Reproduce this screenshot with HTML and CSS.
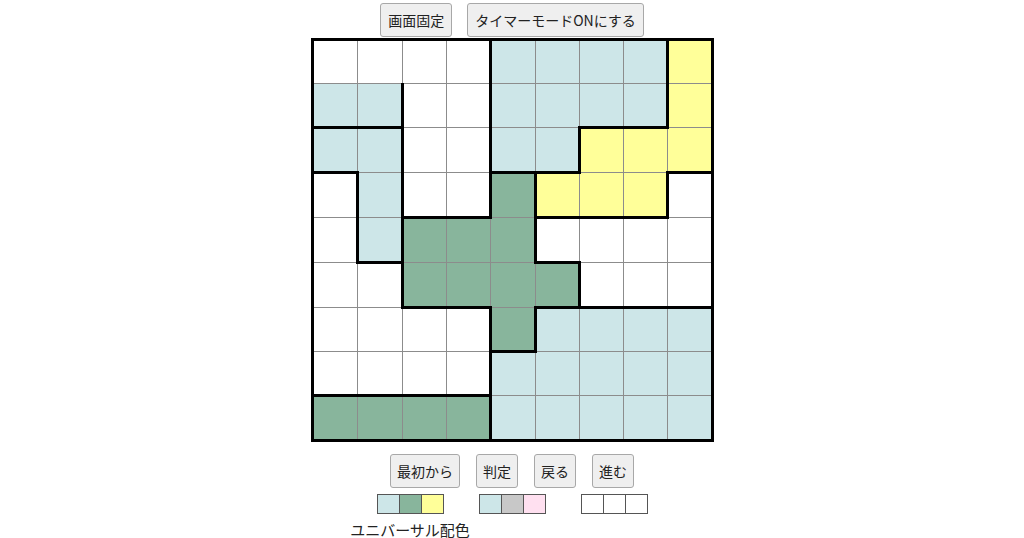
FILE: index.html
```html
<!DOCTYPE html>
<html lang="ja">
<head>
<meta charset="utf-8">
<title>パズル</title>
<link rel="stylesheet" href="styles.css">
</head>
<body>
<div class="page">
  <div class="toolbar top">
    <button class="btn">画面固定</button>
    <button class="btn">タイマーモードONにする</button>
  </div>
  <table class="board">
    <tr><td></td><td></td><td></td><td class="r"></td><td class="c1"></td><td class="c1"></td><td class="c1"></td><td class="c1 r"></td><td class="c3"></td></tr>
    <tr><td class="c1 b"></td><td class="c1 b r"></td><td></td><td class="r"></td><td class="c1"></td><td class="c1"></td><td class="c1"></td><td class="c1 r"></td><td class="c3"></td></tr>
    <tr><td class="c1 t"></td><td class="c1 r"></td><td></td><td class="r"></td><td class="c1"></td><td class="c1 r"></td><td class="c3 t"></td><td class="c3 t"></td><td class="c3"></td></tr>
    <tr><td class="t r"></td><td class="c1 r"></td><td></td><td class="r"></td><td class="c2 t r"></td><td class="c3 t"></td><td class="c3"></td><td class="c3 r"></td><td class="t"></td></tr>
    <tr><td class="r"></td><td class="c1 r b"></td><td class="c2 t"></td><td class="c2 t"></td><td class="c2 r"></td><td class="t b"></td><td class="t"></td><td class="t"></td><td></td></tr>
    <tr><td></td><td class="r"></td><td class="c2 b"></td><td class="c2 b"></td><td class="c2"></td><td class="c2 r b"></td><td class="b"></td><td class="b"></td><td class="b"></td></tr>
    <tr><td></td><td></td><td></td><td class="r"></td><td class="c2 r b"></td><td class="c1"></td><td class="c1"></td><td class="c1"></td><td class="c1"></td></tr>
    <tr><td class="b"></td><td class="b"></td><td class="b"></td><td class="b r"></td><td class="c1"></td><td class="c1"></td><td class="c1"></td><td class="c1"></td><td class="c1"></td></tr>
    <tr><td class="c2"></td><td class="c2"></td><td class="c2"></td><td class="c2 r"></td><td class="c1"></td><td class="c1"></td><td class="c1"></td><td class="c1"></td><td class="c1"></td></tr>
  </table>
  <div class="toolbar bottom">
    <button class="btn">最初から</button>
    <button class="btn">判定</button>
    <button class="btn">戻る</button>
    <button class="btn">進む</button>
  </div>
  <div class="palettes">
    <div class="palette">
      <div class="swatches">
        <span class="sw c1"></span><span class="sw c2"></span><span class="sw c3"></span>
      </div>
      <div class="palette-label">ユニバーサル配色</div>
    </div>
    <div class="palette">
      <div class="swatches">
        <span class="sw c1"></span><span class="sw gray"></span><span class="sw pink"></span>
      </div>
    </div>
    <div class="palette">
      <div class="swatches">
        <span class="sw"></span><span class="sw"></span><span class="sw"></span>
      </div>
    </div>
  </div>
</div>
</body>
</html>
```

FILE: styles.css
```css
html, body {
  margin: 0;
  padding: 0;
  background: #fff;
}
body {
  font-family: "Noto Sans CJK JP", "Noto Sans", sans-serif;
  color: #222;
}
.page {
  display: flex;
  flex-direction: column;
  align-items: center;
  padding-top: 3px;
}
.toolbar {
  display: flex;
  justify-content: center;
}
.toolbar.top {
  gap: 15px;
}
.toolbar.bottom {
  gap: 16px;
  margin-top: 12px;
}
.btn {
  font-family: "Noto Sans CJK JP", "Noto Sans", sans-serif;
  font-size: 14px;
  line-height: 20px;
  color: #222;
  background: #efefef;
  border: 1px solid #a8a8a8;
  border-radius: 3px;
  padding: 6px 7px;
  margin: 0;
}
.toolbar.bottom .btn {
  padding: 6px 6px;
}
.board {
  border-collapse: collapse;
  border: 3px solid #000;
  margin-top: 1px;
}
.board td {
  width: 42px;
  height: 42px;
  padding: 0;
  border: 1px solid #8c8c8c;
  background: #fff;
}
.board td.r {
  border-right: 3px solid #000;
}
.board td.b {
  border-bottom: 3px solid #000;
}
.board td.t {
  border-top: 3px solid #000;
}
.palettes {
  display: flex;
  gap: 35px;
  margin-top: 6px;
  align-items: flex-start;
}
.palette {
  display: flex;
  flex-direction: column;
  align-items: center;
  width: 67px;
}
.swatches {
  display: flex;
}
.sw {
  display: block;
  width: 21px;
  height: 18px;
  border: 1px solid #555;
  background: #fff;
}
.sw + .sw {
  border-left: none;
}
.palette-label {
  font-size: 15px;
  line-height: 20px;
  margin-top: 6px;
  white-space: nowrap;
  color: #222;
}
.c1 { background: #cde6e8 !important; }
.c2 { background: #88b59c !important; }
.c3 { background: #ffff99 !important; }
.sw.gray { background: #c8c8c8; }
.sw.pink { background: #ffe0f0; }
```
